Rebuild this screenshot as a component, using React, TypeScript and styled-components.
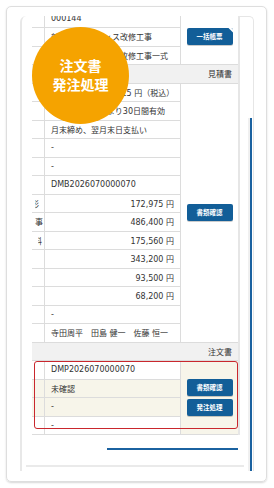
import React from "react";
import styled, { createGlobalStyle } from "styled-components";

const Global = createGlobalStyle`
  html, body { margin: 0; padding: 0; background: #ffffff; }
  body { font-family: "DejaVu Sans", "Noto Sans CJK JP", sans-serif; color: #333; }
`;

const Page = styled.div`
  width: 274px;
  height: 488px;
  box-sizing: border-box;
  padding: 6px 7px 6px 6px;
`;

const Card = styled.div`
  position: relative;
  width: 261px;
  height: 476px;
  box-sizing: border-box;
  border: 1px solid #dedede;
  border-radius: 5px;
  box-shadow: 0 1px 2px rgba(0, 0, 0, 0.16);
  padding: 9px 0 0 13px;
`;

const Screen = styled.div`
  display: flex;
  width: 234px;
  height: 455px;
  box-sizing: border-box;
  border-left: 2px solid #e8e8e8;
  border-top-left-radius: 6px;
  overflow: hidden;
`;

const Main = styled.div`
  display: flex;
  flex-direction: column;
  width: 218px;
  flex: none;
`;

const Table = styled.div`
  position: relative;
  display: grid;
  grid-template-columns: 13px 136px 57px;
  grid-auto-rows: 18.5px;
  width: 208px;
  box-sizing: border-box;
  margin: -6.5px 0 0 10px;
  border-right: 2px solid #e6e6e6;
  font-size: 8px;
`;

const Label = styled.div<{ $bg?: string }>`
  display: flex;
  align-items: center;
  justify-content: flex-end;
  box-sizing: border-box;
  border-right: 1px solid #dcdcdc;
  border-bottom: 1px solid #dcdcdc;
  background: ${(p) => p.$bg || "#fff"};
`;

const LabelClip = styled.span<{ $pad: number; $clip: number }>`
  display: flex;
  justify-content: flex-end;
  width: ${(p) => p.$clip}px;
  overflow: hidden;
  white-space: nowrap;
  padding-right: ${(p) => p.$pad}px;
  box-sizing: border-box;
  color: #333;
`;

const Value = styled.div<{ $bg?: string; $right?: boolean }>`
  display: flex;
  align-items: center;
  justify-content: ${(p) => (p.$right ? "flex-end" : "flex-start")};
  white-space: nowrap;
  overflow: hidden;
  box-sizing: border-box;
  border-right: 1px solid #dcdcdc;
  border-bottom: 1px solid #dcdcdc;
  background: ${(p) => p.$bg || "#fff"};
  padding: 0 6px;
  color: #333;
`;

const Action = styled.div<{ $rows: number; $bg?: string }>`
  grid-row: span ${(p) => p.$rows};
  display: flex;
  flex-direction: column;
  align-items: center;
  justify-content: center;
  gap: 3px;
  box-sizing: border-box;
  border-bottom: 1px solid #dcdcdc;
  background: ${(p) => p.$bg || "#fff"};
`;

const Header = styled.div`
  grid-column: 1 / -1;
  display: flex;
  align-items: center;
  justify-content: flex-end;
  padding-right: 6px;
  box-sizing: border-box;
  background: #f1f1f1;
  border-bottom: 1px solid #dcdcdc;
  color: #333;
`;

const Btn = styled.button`
  position: relative;
  width: 46px;
  height: 17px;
  flex: none;
  border: 0;
  border-radius: 2px;
  padding: 0;
  background: #125e98;
  color: #fff;
  font-family: "Noto Sans CJK JP", sans-serif;
  font-weight: 700;
  font-size: 6.5px;
  line-height: 17px;
  box-shadow: 0 1px 0 rgba(0, 0, 0, 0.2);
  overflow: hidden;
`;

const CornerMark = styled.svg`
  position: absolute;
  right: 0;
  top: 0;
  width: 7px;
  height: 7px;
`;

const Highlight = styled.div`
  position: absolute;
  left: 2px;
  top: 351.5px;
  width: 204px;
  height: 68px;
  box-sizing: border-box;
  border: 1px solid #c9272d;
  border-radius: 3px;
  pointer-events: none;
`;

const HBar = styled.div`
  margin: 12.5px 0 0 85px;
  width: 131px;
  height: 2px;
  flex: none;
  background: #1b62a0;
`;

const HTrack = styled.div`
  margin: 15px 0 0 4px;
  width: 218px;
  height: 2px;
  flex: none;
  background: #eaeaea;
`;

const VBar = styled.div`
  flex: none;
  display: flex;
  flex-direction: column;
  width: 14px;
  box-sizing: border-box;
  border-top: 1px solid #e6e6e6;
  border-right: 1px solid #e6e6e6;
  border-top-right-radius: 5px;
`;

const VThumb = styled.div`
  margin: 101px 0 0 10px;
  width: 2px;
  flex: 1;
  background: #1b62a0;
  box-shadow: -2px 0 0 #f0f0f0;
`;

const Badge = styled.div`
  position: absolute;
  left: 25px;
  top: 20px;
  width: 97px;
  height: 97px;
  border-radius: 50%;
  background: #f5a300;
  color: #fff;
  display: flex;
  flex-direction: column;
  align-items: center;
  justify-content: center;
  font-family: "Noto Sans CJK JP", sans-serif;
  font-weight: 700;
  font-size: 14px;
  line-height: 18.5px;
  padding-bottom: 2px;
  box-sizing: border-box;
`;

type Row = {
  label?: string;
  pad?: number;
  clip?: number;
  value: string;
  right?: boolean;
  bg?: string;
};

const sectionA: Row[] = [
  { value: "000144" },
  { value: "新宿 ビル オフィス改修工事" },
  { value: "新宿 ビル オフィス改修工事一式" },
];

const sectionB: Row[] = [
  { value: "見積金額：1,473,815 円（税込）" },
  { value: "お見積り提出日より30日間有効" },
  { value: "月末締め、翌月末日支払い" },
  { value: "-" },
  { value: "-" },
  { value: "DMB2026070000070" },
  { label: "外構・造形", pad: 5, clip: 9, value: "172,975 円", right: true },
  { label: "設備工事", pad: 1, clip: 9, value: "486,400 円", right: true },
  { label: "現場管理料", pad: 2, clip: 6, value: "175,560 円", right: true },
  { value: "343,200 円", right: true },
  { value: "93,500 円", right: true },
  { value: "68,200 円", right: true },
  { value: "-" },
  { value: "寺田周平　田島 健一　佐藤 恒一" },
];

const BEIGE = "#f7f5ea";

const sectionC: Row[] = [
  { value: "DMP2026070000070" },
  { value: "未確認", bg: BEIGE },
  { value: "-", bg: BEIGE },
  { value: "-" },
];

function rows(list: Row[], action: React.ReactNode, key: string) {
  const out: React.ReactNode[] = [];
  list.forEach((r, i) => {
    out.push(
      <Label key={`${key}l${i}`} $bg={r.bg}>
        {r.label ? (
          <LabelClip $pad={r.pad ?? 0} $clip={r.clip ?? 9}>
            {r.label}
          </LabelClip>
        ) : null}
      </Label>
    );
    out.push(
      <Value key={`${key}v${i}`} $bg={r.bg} $right={r.right}>
        {r.value}
      </Value>
    );
    if (i === 0) out.push(<React.Fragment key={`${key}a`}>{action}</React.Fragment>);
  });
  return out;
}

export default function App() {
  return (
    <Page>
      <Global />
      <Card>
        <Screen>
          <Main>
            <Table>
              {rows(
                sectionA,
                <Action $rows={3}>
                  <Btn>
                    一括帳票
                    <CornerMark viewBox="0 0 7 7">
                      <path d="M2.5 0 L7 0 L7 4.5 Z" fill="#ffffff" />
                    </CornerMark>
                  </Btn>
                </Action>,
                "a"
              )}
              <Header>見積書</Header>
              {rows(
                sectionB,
                <Action $rows={14}>
                  <Btn>書類確認</Btn>
                </Action>,
                "b"
              )}
              <Header>注文書</Header>
              {rows(
                sectionC,
                <Action $rows={4} $bg={BEIGE}>
                  <Btn>書類確認</Btn>
                  <Btn>発注処理</Btn>
                </Action>,
                "c"
              )}
              <Highlight />
            </Table>
            <HBar />
            <HTrack />
          </Main>
          <VBar>
            <VThumb />
          </VBar>
        </Screen>
        <Badge>
          <span>注文書</span>
          <span>発注処理</span>
        </Badge>
      </Card>
    </Page>
  );
}
